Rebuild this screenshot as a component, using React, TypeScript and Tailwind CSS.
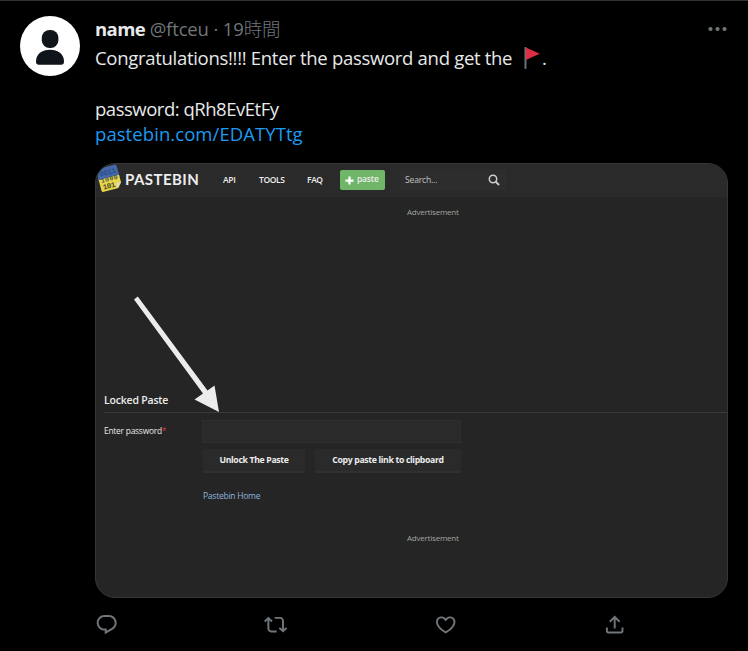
import React from "react";

const latin = "font-['Open_Sans','Noto_Sans_CJK_JP',sans-serif]";
const body = "text-[18.5px] leading-[26px] whitespace-pre";

function Action({ d }: { d: string }) {
  return (
    <svg viewBox="0 0 24 24" className="size-[23.4px] shrink-0 fill-[#71767b]">
      <path d={d} />
    </svg>
  );
}

function Avatar() {
  return (
    <svg viewBox="0 0 60 60" className="size-[60px] shrink-0">
      <circle cx="30" cy="30" r="30" fill="#fff" />
      <rect x="21.8" y="14" width="16.6" height="18" rx="7.8" fill="#0f151b" />
      <path d="M16 45.5C16 38 22 33.8 30 33.8s14 4.200 14 11.700c0 2.300-.8 3.300-3 3.300H19c-2.200 0-3-1-3-3.300z" fill="#0f151b" />
    </svg>
  );
}

function Flag() {
  return (
    <svg viewBox="0 0 22 22" className="h-[22px] w-[22px] shrink-0">
      <rect x="4.500" y="0" width="2" height="22" rx="0.8" fill="#66757f" />
      <path d="M5.800 .4L19.800 6.800 5.800 13z" fill="#dd2e44" />
    </svg>
  );
}

function PastebinLogo() {
  return (
    <svg viewBox="0 0 26 30" className="mb-[3px] h-[30px] w-[26px] shrink-0">
      <g transform="rotate(-15 13 15)">
        <rect x="2.500" y="3.500" width="21" height="14" rx="2" fill="#4468a8" />
        <path d="M2.500 14h21v8.500l-4 4.500H4.500a2 2 0 0 1-2-2z" fill="#e9d648" />
        <rect x="2.500" y="12" width="21" height="2.500" fill="#4468a8" />
        <path d="M23.500 21.500l-5 5.500v-4a1.500 1.500 0 0 1 1.500-1.500z" fill="#d8d8c8" />
        <text x="4.500" y="11.500" fontSize="7.500" fontWeight="700" fill="#2c4f8c" textLength="17" fontFamily="Liberation Mono, monospace">0011</text>
        <text x="4.500" y="18" fontSize="6.500" fontWeight="700" fill="#4d5745" textLength="17" fontFamily="Liberation Mono, monospace">1000</text>
        <text x="4.500" y="25" fontSize="7.500" fontWeight="700" fill="#454530" textLength="13" fontFamily="Liberation Mono, monospace">101</text>
      </g>
    </svg>
  );
}

function PasteShot() {
  return (
    <div className="relative h-[435px] w-[633px] overflow-hidden rounded-[20px] border border-[#343638] bg-[#252525] text-[#ededed]">
      <div className="flex h-[33px] items-center bg-[#2a2a2a] pb-[2px] text-[8.500px] font-semibold leading-3">
        <PastebinLogo />
        <span className="ml-[3px] w-[98px] whitespace-nowrap pb-px font-['Lato',sans-serif] text-[15px] font-bold leading-5 tracking-[0.45px]">PASTEBIN</span>
        <span className="w-[36px] tracking-[-0.3px]">API</span>
        <span className="w-[48px] tracking-[-0.4px]">TOOLS</span>
        <span className="w-[33px] tracking-[-0.4px]">FAQ</span>
        <div className="flex h-[20px] w-[45px] items-center rounded-[2px] bg-[#6fb668] pl-[5px]">
          <svg viewBox="0 0 10 10" className="mt-px size-[9px]"><path d="M5 .5v9M.5 5h9" stroke="#fff" strokeWidth="2.500" /></svg>
          <span className="ml-[3px] pb-[2px] tracking-[-0.2px]">paste</span>
        </div>
        <div className="ml-[15px] flex h-[21px] w-[107px] items-center justify-between bg-[#2d2d2d] pl-[5px] pr-[7px] font-normal text-[#c2c2c2]">
          <span className="tracking-[-0.15px]">Search...</span>
          <svg viewBox="0 0 12 12" className="size-[12px]"><circle cx="5" cy="5" r="3.700" fill="none" stroke="#cfcfcf" strokeWidth="1.500" /><path d="M7.700 7.700l3.300 3.300" stroke="#cfcfcf" strokeWidth="1.900" /></svg>
        </div>
      </div>
      <div className="ml-[311px] mt-[9px] text-[8px] leading-3 tracking-[-0.22px] text-[#a3a3a3]">Advertisement</div>
      <div className="ml-2 mt-[174px] flex h-[21px] border-b border-[#3a3a3a] text-[10.500px] font-semibold leading-[16px] tracking-[-0.2px]">Locked Paste</div>
      <div className="ml-2 mt-[7px] flex">
        <div className="w-[98px] pt-[5px] text-[8.400px] leading-3 tracking-[-0.22px] text-[#e8e8e8]">Enter password<span className="text-[#e03434]">*</span></div>
        <div>
          <div className="h-[23px] w-[259px] border border-[#2f2f2f] bg-[#2a2a2a]" />
          <div className="mt-[6px] flex gap-[10px] pl-px text-[8.700px] font-bold leading-[22px] tracking-[-0.33px]">
            <div className="h-[24px] w-[102px] border-b-2 border-[#303030] bg-[#2a2a2a] text-center">Unlock The Paste</div>
            <div className="h-[24px] w-[146px] border-b-2 border-[#303030] bg-[#2a2a2a] text-center">Copy paste link to clipboard</div>
          </div>
          <div className="ml-px mt-[17px] text-[8.500px] leading-3 tracking-[-0.25px] text-[#8db4dc]">Pastebin Home</div>
        </div>
      </div>
      <div className="ml-[311px] mt-[30px] text-[8px] leading-3 tracking-[-0.22px] text-[#a3a3a3]">Advertisement</div>
      <svg viewBox="0 0 100 130" className="absolute left-[34px] top-[126px] h-[130px] w-[100px]">
        <path d="M4 9.400L7.800 6.600 77.500 100.500 84.500 95.500 89 122 64.500 109.500 73 103.500z" fill="#ececec" />
      </svg>
    </div>
  );
}

export default function App() {
  return (
    <div className={`h-[651px] w-[748px] overflow-hidden border-t border-[#2f3336] bg-black text-[#e7e9ea] ${latin}`}>
      <div className="flex pl-5 pt-[15px]">
        <Avatar />
        <div className="ml-[15px] w-[633px]">
          <div className="flex h-[28px] items-center justify-between pb-[3px]">
            <div className={body}>
              <span className="font-bold tracking-[-0.6px]">name</span>
              <span className="tracking-[-0.15px] text-[#71767b]"> @ftceu · 19<span className="font-light">時間</span></span>
            </div>
            <svg viewBox="0 0 20 6" className="h-[6px] w-[20px] fill-[#71767b]"><circle cx="2.500" cy="3" r="2.100" /><circle cx="9.500" cy="3" r="2.100" /><circle cx="16.500" cy="3" r="2.100" /></svg>
          </div>
          <div className={`flex h-[27px] items-center ${body}`}>
            <span className="w-[425px] tracking-[-0.3px]">Congratulations!!!! Enter the password and get the</span>
            <Flag /><span>.</span>
          </div>
          <div className={`mt-[25px] h-[25px] tracking-[-0.48px] ${body}`}>password: qRh8EvEtFy</div>
          <div className={`mb-[16px] h-[26px] tracking-[0.07px] text-[#1d9bf0] ${body}`}>pastebin.com/EDATYTtg</div>
          <PasteShot />
          <div className="mt-[15px] flex gap-[146px]">
            <Action d="M1.751 10c0-4.42 3.584-8 8.005-8h4.366c4.49 0 8.129 3.64 8.129 8.13 0 2.96-1.607 5.68-4.196 7.11l-8.054 4.46v-3.69h-.067c-4.49.1-8.183-3.51-8.183-8.01zm8.005-6c-3.317 0-6.005 2.69-6.005 6 0 3.37 2.77 6.08 6.138 6.01l.351-.01h1.761v2.3l5.087-2.81c1.951-1.08 3.163-3.13 3.163-5.36 0-3.39-2.744-6.13-6.129-6.13H9.756z" />
            <Action d="M4.5 3.88l4.432 4.14-1.364 1.46L5.5 7.55V16c0 1.1.896 2 2 2H13v2H7.5c-2.209 0-4-1.79-4-4V7.55L1.432 9.48.068 8.02 4.5 3.88zM16.5 6H11V4h5.5c2.209 0 4 1.79 4 4v8.45l2.068-1.93 1.364 1.46-4.432 4.14-4.432-4.14 1.364-1.46 2.068 1.93V8c0-1.1-.896-2-2-2z" />
            <Action d="M16.697 5.5c-1.222-.06-2.679.51-3.89 2.16l-.805 1.09-.806-1.09C9.984 6.01 8.526 5.44 7.304 5.5c-1.243.07-2.349.78-2.91 1.91-.552 1.12-.633 2.78.479 4.82 1.074 1.97 3.257 4.27 7.129 6.61 3.87-2.34 6.052-4.64 7.126-6.61 1.111-2.04 1.03-3.7.477-4.82-.561-1.13-1.666-1.84-2.908-1.91zm4.187 7.69c-1.351 2.48-4.001 5.12-8.379 7.67l-.503.3-.504-.3c-4.379-2.55-7.029-5.19-8.382-7.67-1.36-2.5-1.41-4.86-.514-6.67.887-1.79 2.647-2.91 4.601-3.01 1.651-.09 3.368.56 4.798 2.01 1.429-1.45 3.146-2.1 4.796-2.01 1.954.1 3.714 1.22 4.601 3.01.896 1.81.846 4.17-.514 6.67z" />
            <Action d="M12 2.59l5.7 5.7-1.41 1.42L13 6.41V16h-2V6.41l-3.3 3.3-1.41-1.42L12 2.59zM21 15l-.02 3.51c0 1.38-1.12 2.49-2.5 2.49H5.5C4.11 21 3 19.88 3 18.5V15h2v3.5c0 .28.22.5.5.5h12.98c.28 0 .5-.22.5-.5L19 15h2z" />
          </div>
        </div>
      </div>
    </div>
  );
}
